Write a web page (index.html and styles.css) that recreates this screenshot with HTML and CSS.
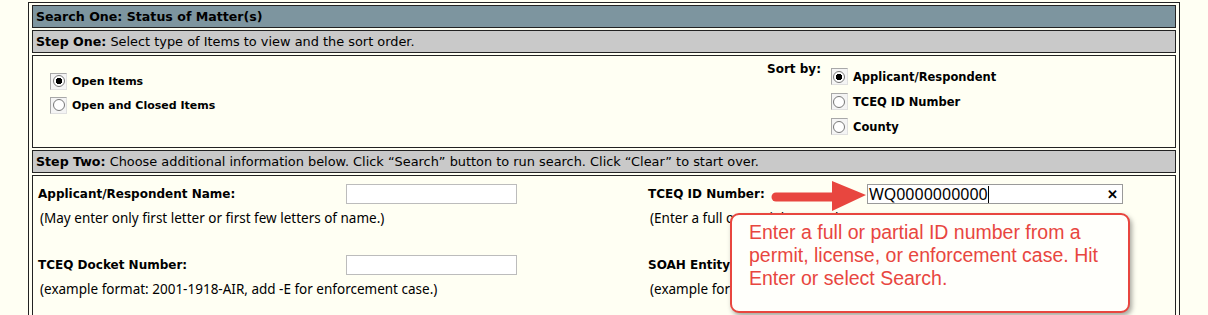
FILE: index.html
```html
<!DOCTYPE html>
<html lang="en">
<head>
  <meta charset="UTF-8">
  <title>Status of Matters Search</title>
  <link rel="stylesheet" href="styles.css">
</head>
<body>
  <div class="frame">
    <div class="row title">Search One: Status of Matter(s)</div>
    <div class="row step"><b>Step One:</b> Select type of Items to view and the sort order.</div>

    <div class="row options">
      <div class="items">
        <label class="opt"><span class="radio on"></span>Open Items</label>
        <label class="opt"><span class="radio"></span>Open and Closed Items</label>
      </div>
      <div class="sort">
        <span class="sort-label">Sort by:</span>
        <div class="sort-list">
          <label class="opt"><span class="radio on"></span>Applicant/Respondent</label>
          <label class="opt"><span class="radio"></span>TCEQ ID Number</label>
          <label class="opt"><span class="radio"></span>County</label>
        </div>
      </div>
    </div>

    <div class="row step"><b>Step Two:</b> Choose additional information below. Click “Search” button to run search. Click “Clear” to start over.</div>

    <div class="row fields">
      <div class="field">
        <div class="line">
          <span class="name">Applicant/Respondent Name:</span>
          <input type="text" class="box">
        </div>
        <div class="hint">(May enter only first letter or first few letters of name.)</div>
      </div>
      <div class="field right">
        <div class="line">
          <span class="name">TCEQ ID Number:</span>
          <span class="box wide">WQ0000000000<i class="caret"></i><span class="clear">✕</span></span>
        </div>
        <div class="hint">(Enter a full or partial ID number.)</div>
      </div>
      <div class="field">
        <div class="line">
          <span class="name">TCEQ Docket Number:</span>
          <input type="text" class="box">
        </div>
        <div class="hint">(example format: 2001-1918-AIR, add -E for enforcement case.)</div>
      </div>
      <div class="field right">
        <div class="line">
          <span class="name">SOAH Entity Number:</span>
          <input type="text" class="box">
        </div>
        <div class="hint">(example format: 582-01-0000)</div>
      </div>
    </div>
  </div>

  <!-- annotation drawn over the form -->
  <svg class="arrow" width="100" height="34" viewBox="0 0 100 34">
    <line x1="6" y1="18" x2="66" y2="18" stroke="#e8463f" stroke-width="9" stroke-linecap="round"/>
    <polygon points="62,2 96,16 62,32" fill="#e8463f"/>
  </svg>
  <div class="callout">Enter a full or partial ID number from a permit, license, or enforcement case. Hit Enter or select Search.</div>
</body>
</html>
```

FILE: styles.css
```css
body {
  margin: 0;
  background: #fffff3;
  font-family: "DejaVu Sans", Verdana, sans-serif;
  font-size: 11px;
  color: #000;
}
.frame {
  position: relative;
  width: 1144px;
  margin: 2px 0 0 28px;
  padding: 2px 3px;
  border: 1px solid #222;
  display: flex;
  flex-direction: column;
  gap: 2px;
}
.row {
  border: 1px solid #222;
  box-sizing: border-box;
}
.title {
  height: 23px;
  padding: 3px 3px 0;
  background: #7d959f;
  font-weight: bold;
  font-size: 12.6px;
}
.step {
  height: 23px;
  padding: 3px 3px 0;
  background: #c9c9c9;
  font-size: 12.9px;
}
.step b {
  font-size: 12.6px;
}
.options {
  height: 93px;
  display: flex;
  justify-content: space-between;
  padding: 6px 0 0 17px;
}
.opt {
  display: flex;
  align-items: center;
  gap: 5px;
  height: 24px;
  font-weight: bold;
}
.items {
  padding-top: 7px;
}
.sort {
  display: flex;
  width: 408px;
  gap: 10px;
}
.sort-label {
  font-size: 12px;
  font-weight: bold;
}
.sort-list {
  padding-top: 2px;
}
.sort-list .opt {
  height: 25px;
  font-size: 11.5px;
}
.radio {
  width: 15px;
  height: 15px;
  border: 1px solid #a8a8a8;
  border-right-color: #e0e0e0;
  border-bottom-color: #e0e0e0;
  display: flex;
  align-items: center;
  justify-content: center;
  background: #f4f4f4;
}
.radio::before {
  content: "";
  width: 12px;
  height: 12px;
  border: 1px solid #777;
  border-radius: 50%;
  background: #fff;
  box-sizing: border-box;
  display: block;
}
.radio.on::before {
  background: radial-gradient(circle, #000 0 3px, #fff 3.5px);
}
.fields {
  display: grid;
  grid-template-columns: 610px 1fr;
  grid-auto-rows: 71px;
  padding: 7px 0 0 5px;
  min-height: 140px;
}
.line {
  display: flex;
  align-items: center;
  height: 21px;
}
.name {
  font-weight: bold;
  font-size: 12px;
  width: 308px;
}
.right .name {
  width: 219px;
}
.box {
  width: 171px;
  height: 20px;
  border: 1px solid #bcbcbc;
  background: #fff;
  box-sizing: border-box;
  padding: 0;
}
.box.wide {
  position: relative;
  width: 256px;
  border-color: #9a9a9a;
  font-family: "Noto Sans", sans-serif;
  font-size: 16px;
  line-height: 18px;
  padding-left: 1px;
}
.caret {
  display: inline-block;
  width: 1px;
  height: 17px;
  background: #000;
  vertical-align: -3px;
}
.clear {
  position: absolute;
  right: 4px;
  top: 0;
  font-size: 13px;
  font-weight: bold;
}
.hint {
  font-family: "Noto Sans", sans-serif;
  font-size: 13.5px;
  padding: 5px 0 0 2px;
}
.arrow {
  position: absolute;
  left: 770px;
  top: 179px;
}
.callout {
  position: absolute;
  left: 730px;
  top: 213px;
  width: 362px;
  height: 78px;
  padding: 6px 17px 12px 17px;
  background: #fffffb;
  border: 2px solid #e8463f;
  border-radius: 9px;
  box-shadow: 2px 3px 5px rgba(0, 0, 0, 0.35);
  color: #e8463f;
  font-family: "Liberation Sans", Arial, sans-serif;
  font-size: 19.5px;
  line-height: 23px;
}
```
